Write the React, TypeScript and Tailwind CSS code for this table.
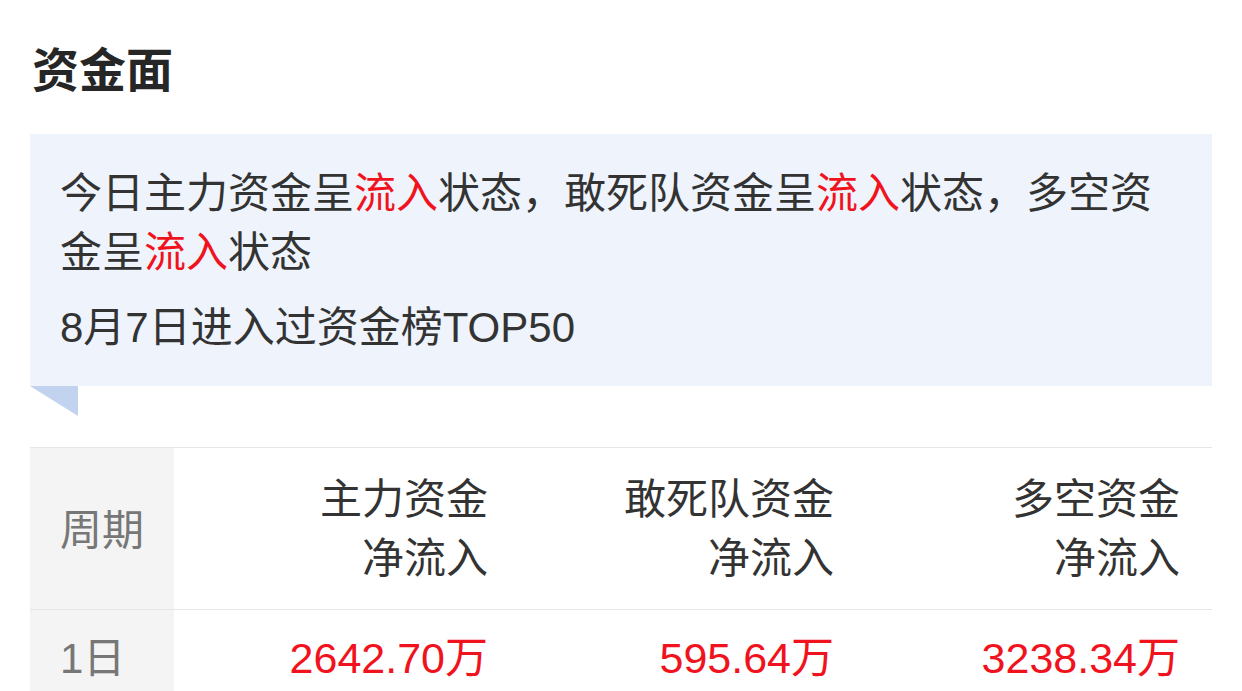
import React from 'react'

const font = { fontFamily: '"Liberation Sans", "Noto Sans CJK SC", sans-serif' }

const Red = ({ children }: { children: React.ReactNode }) => (
  <span className="text-[#f0131e]">{children}</span>
)

const columns = [
  { l1: '主力资金', l2: '净流入', value: '2642.70万' },
  { l1: '敢死队资金', l2: '净流入', value: '595.64万' },
  { l1: '多空资金', l2: '净流入', value: '3238.34万' }
]

export default function App() {
  return (
    <div className="w-[1242px] h-[691px] overflow-hidden bg-white px-[30px]" style={font}>
      {/* Title */}
      <h1 className="pt-[48px] pl-[2px] text-[47px] leading-[46px] font-bold text-[#262626]">资金面</h1>

      {/* Summary box */}
      <div className="mt-[40px] bg-[#eef3fc] pl-[30px] pr-[32px] pt-[30px] pb-[29px] text-[42px] leading-[59px] text-[#333]">
        <p>
          今日主力资金呈<Red>流入</Red>状态，敢死队资金呈<Red>流入</Red>状态，多空资金呈<Red>流入</Red>状态
        </p>
        <p className="mt-[16px]">8月7日进入过资金榜TOP50</p>
      </div>
      <svg width="48" height="30" viewBox="0 0 48 30" className="block">
        <polygon points="0,0 48,0 48,30" fill="#c2d3ef" />
      </svg>

      {/* Table */}
      <div className="mt-[31px] border-t border-[#e6e6e6]">
        <div className="flex h-[162px] border-b border-[#e6e6e6]">
          <div className="w-[144px] flex items-center pl-[30px] pt-[4px] bg-[#f4f4f4] text-[42px] text-[#777]">周期</div>
          {columns.map((c) => (
            <div key={c.l1} className="flex-1 flex flex-col items-end justify-center pr-[32px] text-[42px] leading-[59px] text-[#333]">
              <span>{c.l1}</span>
              <span>{c.l2}</span>
            </div>
          ))}
        </div>
        <div className="flex h-[96px]">
          <div className="w-[144px] flex items-center pl-[30px] bg-[#f4f4f4] text-[42px] text-[#777]">1日</div>
          {columns.map((c) => (
            <div key={c.l1} className="flex-1 flex items-center justify-end pr-[32px] text-[43px] text-[#f0131e]">
              {c.value}
            </div>
          ))}
        </div>
      </div>
    </div>
  )
}
